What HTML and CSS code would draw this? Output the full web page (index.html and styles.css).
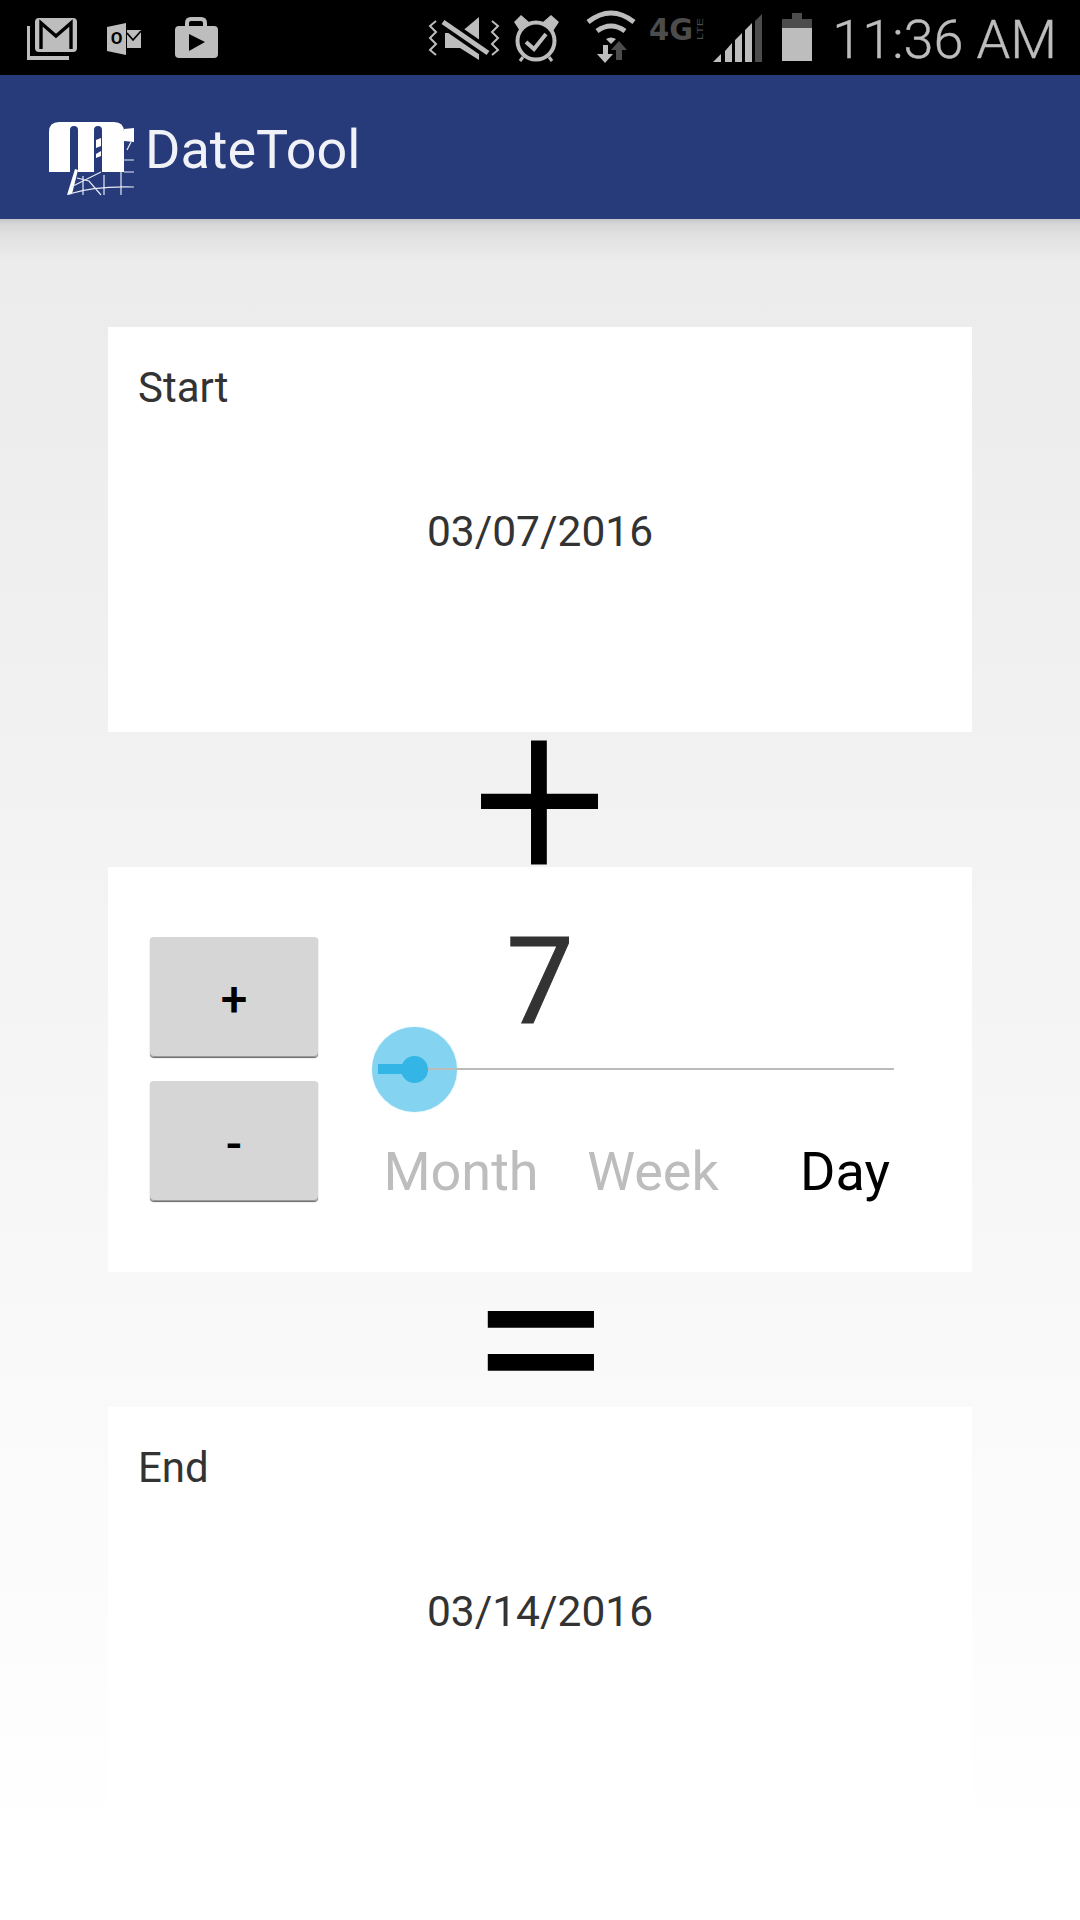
FILE: index.html
```html
<!DOCTYPE html>
<html lang="en">
<head>
  <meta charset="UTF-8" />
  <meta name="viewport" content="width=device-width, initial-scale=1.0"/>
  <title>DateTool</title>
  <link rel="stylesheet" href="styles.css">
</head>
<body>
  <div class="statusbar">
    <div class="status-icons">
      <!-- viewBoxes use page x so each icon can be compared to the screenshot -->
      <svg width="79" height="75" viewBox="26 0 79 75">
        <path class="fg" d="M27 26h3v30h39v4H27z"/>
        <rect class="fg" x="35" y="18" width="42" height="34" rx="4"/>
        <path class="cut" d="M41 49V23l15 13 15-13v26" stroke-width="3.4"/>
      </svg>
      <svg width="67" height="75" viewBox="105 0 67 75">
        <path class="fg" d="M107 27l19-4v32l-19-4z"/>
        <text class="outlook-o" x="116.500" y="44" text-anchor="middle">O</text>
        <path class="fg" d="M127 30h14v18h-14z"/>
        <path class="cut" d="M127 33l6 7 8-9" stroke-width="1.800"/>
      </svg>
      <svg width="48" height="75" viewBox="172 0 48 75">
        <path class="line" d="M187 28v-5q0-4 4-4h10q4 0 4 4v5" stroke-width="4"/>
        <rect class="fg" x="175" y="26" width="43" height="32" rx="4"/>
        <path class="black" d="M189 34l16 8-16 9z"/>
      </svg>
    </div>
    <div class="status-icons right">
      <svg width="80" height="75" viewBox="425 0 80 75">
        <path class="line" d="M436 21l-6 5 6 6-6 6 6 6-6 6 6 5M492 21l6 5-6 6 6 6-6 6 6 6-6 5" stroke-width="2"/>
        <path class="fg" d="M445 33h15l19-16v43l-19-12h-15z"/>
        <path class="cut" d="M443 22l45 31" stroke-width="12"/>
        <path class="line" d="M443 22l45 31" stroke-width="5"/>
      </svg>
      <svg width="65" height="75" viewBox="505 0 65 75">
        <circle class="line" cx="536" cy="41" r="18.500" stroke-width="4"/>
        <path class="line" d="M526 42l8 7 12-15" stroke-width="4"/>
        <path class="fg" d="M514 22l7-7 8 7-9 9zM543 22l8-7 8 7-6 9z"/>
        <path class="line" d="M523 57l-3 4M549 57l3 4" stroke-width="3"/>
      </svg>
      <svg width="75" height="75" viewBox="570 0 75 75">
        <path class="line" d="M588 22q23-18 46 0" stroke-width="5"/>
        <path class="line" d="M597 31q14-10 28 0" stroke-width="5"/>
        <path class="fg" d="M606 39q5-3 10 0l-5 5z"/>
        <path class="dim" d="M619 41l8 9h-5v10h-6V50h-5z"/>
        <path class="fg" d="M603 45h5v9h5l-8 9-8-9h6z"/>
      </svg>
      <svg width="63" height="75" viewBox="645 0 63 75">
        <text class="net" x="649" y="40" textLength="44" lengthAdjust="spacingAndGlyphs">4G</text>
        <text class="lte" transform="translate(703 40) rotate(-90)" textLength="22" lengthAdjust="spacingAndGlyphs">LTE</text>
      </svg>
      <svg width="67" height="75" viewBox="708 0 67 75">
        <path class="fg" d="M713 62l8-8v8zM725 62V51l7-8v19zM735 62V40l7-7v29zM745 62V30l7-7v39z"/>
        <path class="dim" d="M755 62V21l7-7v48z"/>
      </svg>
      <svg width="50" height="75" viewBox="775 0 50 75">
        <path class="dim" d="M792 13h10v6h10v9h-30v-9h10z"/>
        <rect class="fg" x="782" y="28" width="30" height="33"/>
      </svg>
    </div>
    <div class="clock">11:36 AM</div>
  </div>

  <header class="appbar">
    <svg class="logo" width="90" height="80" viewBox="45 118 90 80">
      <path class="white" d="M48 172v-40q0-10 10-10h55q10 0 10 10v40h-22v-42q0-4-4-4t-4 4v42H77v-42q0-4-4-4t-4 4v42z"/>
      <path class="white" d="M95 140l5-2v8l-5 2zM95 154l5-3v5l-5 2zM123 129l10-1v14l-10-1zM66 195l8-26 3 1-6 24z"/>
      <path class="thin" d="M68 194q25-8 65-7M70 187l30-15M76 178l12 3 12 14M103 175v20M120 172v23M123 172h10M123 160h10M126 150l4-8M82 176v19"/>
    </svg>
    <h1 class="title">DateTool</h1>
  </header>

  <main class="content">
    <section class="card">
      <div class="card-label">Start</div>
      <div class="card-date">03/07/2016</div>
    </section>

    <div class="sign sign-plus">+</div>

    <section class="card card-amount">
      <div class="steppers">
        <button class="stepper" type="button">+</button>
        <button class="stepper" type="button">-</button>
      </div>
      <div class="amount">
        <div class="amount-value">7</div>
        <div class="slider">
          <div class="slider-halo"></div>
          <div class="slider-track"></div>
          <div class="slider-fill"></div>
          <div class="slider-thumb"></div>
        </div>
        <div class="units">
          <span class="unit">Month</span>
          <span class="unit">Week</span>
          <span class="unit unit-active">Day</span>
        </div>
      </div>
    </section>

    <div class="sign sign-equals">=</div>

    <section class="card">
      <div class="card-label">End</div>
      <div class="card-date">03/14/2016</div>
    </section>
  </main>
</body>
</html>
```

FILE: styles.css
```css
* {
  box-sizing: border-box;
}

body {
  margin: 0;
  width: 1080px;
  height: 1920px;
  overflow: hidden;
  font-family: Roboto, "Liberation Sans", sans-serif;
  background: #fff;
}

.statusbar {
  height: 75px;
  background: #000;
  display: flex;
  justify-content: space-between;
  padding-left: 26px;
  padding-right: 23px;
}

.status-icons {
  display: flex;
}

.status-icons.right {
  margin-left: auto;
}

.status-icons svg {
  display: block;
}

.fg { fill: #bdbdbd; }
.dim { fill: #4c4c4c; }
.black { fill: #000; }
.white { fill: #fff; }

.line {
  fill: none;
  stroke: #bdbdbd;
}

.cut {
  fill: none;
  stroke: #000;
}

.thin {
  fill: none;
  stroke: #e6e9f5;
  stroke-width: 1.2;
}

.outlook-o {
  font: bold 17px Roboto, sans-serif;
  fill: #000;
}

.net {
  font: bold 30px "DejaVu Sans", sans-serif;
  fill: #4c4c4c;
}

.lte {
  font: 9px "Liberation Sans", sans-serif;
  fill: #4c4c4c;
}

.clock {
  width: 232px;
  color: #bdbdbd;
  font-size: 54px;
  font-weight: 300;
  line-height: 80px;
  text-align: right;
  white-space: nowrap;
  -webkit-text-stroke: 0.4px #bdbdbd;
}

.appbar {
  height: 144px;
  background: #273a7a;
  display: flex;
  align-items: center;
  padding-left: 46px;
}

.logo {
  display: block;
  flex: none;
  align-self: flex-start;
  margin-top: 43px;
}

.title {
  margin: 6px 0 0 9px;
  color: #f0f2f8;
  font-size: 54px;
  font-weight: 400;
  line-height: 60px;
}

.content {
  height: 1701px;
  padding: 108px 108px 0;
  background:
    linear-gradient(#c4c7ca 0, #d8d8d8 6px, #e2e2e2 18px, rgba(236, 236, 236, 0) 40px) top / 100% 40px no-repeat,
    linear-gradient(#ebebeb 0, #ffffff 96%);
}

.card {
  height: 405px;
  background: #fff;
  padding: 37px 30px 0;
  color: #333;
}

.card-label {
  font-size: 42px;
  line-height: 48px;
}

.card-date {
  margin-top: 96px;
  font-size: 42.5px;
  line-height: 48px;
  text-align: center;
}

.sign {
  height: 135px;
  display: flex;
  align-items: center;
  justify-content: center;
  color: #000;
  line-height: 135px;
}

.sign-plus {
  font-size: 236px;
  font-weight: 300;
  -webkit-text-stroke: 2px #000;
}

/* the bars are wider and closer together than any Roboto weight gives */
.sign-equals {
  font-size: 212px;
  font-weight: 400;
  transform: scaleX(1.23);
}

.card-amount {
  display: flex;
  padding: 0 30px 0 42px;
}

.steppers {
  width: 168px;
  padding-top: 70px;
  flex: none;
}

.stepper {
  display: block;
  width: 168px;
  height: 120px;
  margin-bottom: 24px;
  padding: 6px 0 0;
  border: 0;
  border-radius: 4px;
  background: #d6d6d6;
  box-shadow: inset 0 -1px 0 #999, 0 1px 1px #666;
  color: #000;
  font-family: Roboto, sans-serif;
  font-size: 48px;
  font-weight: 500;
  line-height: 108px;
}

.amount {
  margin-left: 47px;
  flex: 1;
}

.amount-value {
  width: 350px;
  height: 160px;
  padding-top: 70px;
  font-size: 120px;
  line-height: 90px;
  text-align: center;
  -webkit-text-stroke: 1px #333;
}

.slider {
  position: relative;
  height: 85px;
}

.slider-halo {
  position: absolute;
  left: 7px;
  top: 0;
  width: 85px;
  height: 85px;
  border-radius: 50%;
  background: #84d3f0;
  box-shadow: 0 0 2px #bfe9f8;
}

.slider-track {
  position: absolute;
  left: 49px;
  top: 41px;
  width: 480px;
  height: 2px;
  background: #bbb;
}

.slider-fill {
  position: absolute;
  left: 13px;
  top: 37px;
  width: 40px;
  height: 10px;
  background: #33b5e5;
}

.slider-thumb {
  position: absolute;
  left: 36px;
  top: 29px;
  width: 27px;
  height: 27px;
  border-radius: 50%;
  background: #33b5e5;
}

.units {
  display: grid;
  grid-template-columns: repeat(3, 192px);
  margin-top: 30px;
}

.unit {
  color: #bdbdbd;
  font-size: 54px;
  line-height: 60px;
  text-align: center;
}

.unit-active {
  color: #000;
}
```
